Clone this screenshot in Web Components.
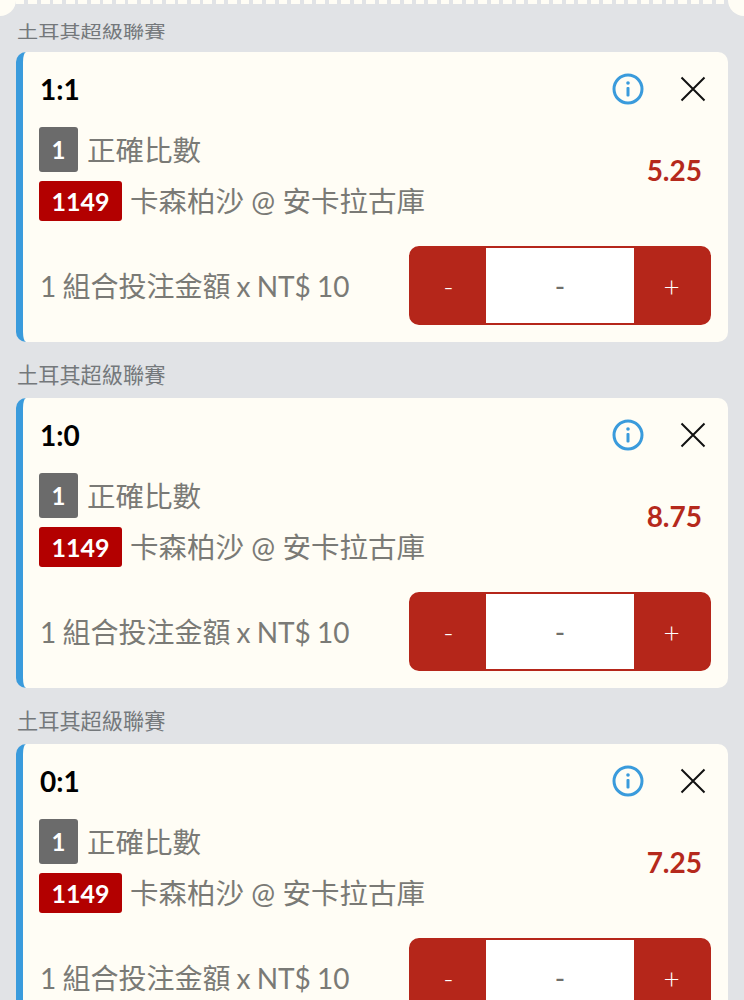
<!DOCTYPE html>
<html lang="zh-Hant"><head><meta charset="utf-8">
<style>
html,body{margin:0;padding:0;height:1000px;overflow:hidden;background:#e1e3e6}
body{font-family:Lato,"Noto Sans CJK TC",sans-serif}
</style></head><body>
<template id="tear-t"><style>
:host{display:flex;height:5px;overflow:visible}
.d{flex:1;height:4px;background:repeating-linear-gradient(90deg,#fffdf5 0 8.5px,#e1e3e6 8.5px 12.5px)}
.c{width:16px;height:16px;background:#fffdf5;flex:none}
.l{border-bottom-right-radius:16px}.r{border-bottom-left-radius:16px}
</style><div class="c l"></div><div class="d"></div><div class="c r"></div></template>
<template id="card-t"><style>
:host{display:block}
.lab{height:var(--lab-h,56px);box-sizing:border-box;padding:var(--lab-pad,21px) 0 0 17px;font:400 21.2px/24px Lato,"Noto Sans CJK TC",sans-serif;color:#74787b}
.lab span{display:block;transform-origin:0 100%;transform:var(--lab-tf,none)}
.card{margin:0 16px;height:290px;box-sizing:border-box;background:#fffdf5;border-left:7px solid #3a9bdc;border-radius:10px;padding:20px 17px 17px 16px;color:#7a7a76}
.top{display:flex;align-items:center;height:34px;padding-bottom:2px;margin-bottom:19px}
.t{font:700 28px/34px Lato,sans-serif;color:#000;flex:1;padding-left:1px}
.ic{display:block}
.i{margin-right:35px}.x{margin-right:4px}
.mid{display:flex;align-items:center}
.info{flex:1;display:flex;flex-direction:column;gap:9px}
.r{display:flex;align-items:center;gap:9px;font:400 28.5px/40px Lato,"Noto Sans CJK TC",sans-serif}
.r.n{gap:8px}
.b{box-sizing:border-box;display:flex;align-items:center;justify-content:center;border-radius:3px;color:#fff;font:700 24px/1 Lato,sans-serif}
.b1{width:39px;height:45px;background:#6b6b6b}
.b2{width:83px;height:40px;background:#b30000;font-size:25px}
.odds{font:700 28px/1 Lato,sans-serif;color:#b5291c;margin:0 9px 0 0;position:relative;top:-4px}
.foot{display:flex;align-items:center;justify-content:space-between;margin-top:25px}
.amt{font:400 28px/40px Lato,"Noto Sans CJK TC",sans-serif;padding-left:1px;word-spacing:-1px}
c-stepper{flex:none}
</style><div class="lab"><span><slot name="league"></slot></span></div>
<div class="card"><div class="top"><div class="t"><slot name="score"></slot></div>
<svg class="ic i" width="32" height="32" viewBox="0 0 32 32"><circle cx="16" cy="16" r="14" fill="none" stroke="#3a9bdc" stroke-width="3"/><circle cx="16" cy="10" r="1.8" fill="#3a9bdc"/><rect x="14.5" y="14" width="3" height="9.5" rx="1" fill="#3a9bdc"/></svg>
<svg class="ic x" width="28" height="28" viewBox="0 0 28 28"><path d="M2.5 2.5 25.5 25.5M25.5 2.5 2.5 25.5" stroke="#111" stroke-width="2" fill="none"/></svg></div>
<div class="mid"><div class="info"><div class="r"><span class="b b1">1</span><span>正確比數</span></div><div class="r n"><span class="b b2">1149</span><span>卡森柏沙 @ 安卡拉古庫</span></div></div><div class="odds"><slot name="odds"></slot></div></div>
<div class="foot"><div class="amt">1 組合投注金額 x NT$ 10</div><c-stepper></c-stepper></div></div></template>
<template id="step-t"><style>
:host{display:flex;width:302px;height:79px;box-sizing:border-box;border:2px solid #b5261a;border-radius:10px;background:#b5261a;font:300 28px/1 Lato,sans-serif;color:#fff;overflow:hidden}
.s{flex:none;width:75px;display:flex;align-items:center;justify-content:center}
.m{flex:1;background:#fff;color:#6f6f6b;font-weight:400;display:flex;align-items:center;justify-content:center}
</style><div class="s">-</div><div class="m">-</div><div class="s">+</div></template>

<c-tear></c-tear>
<c-bet style="--lab-h:47px;--lab-pad:12px;--lab-tf:scaleY(.8)"><span slot="league">土耳其超級聯賽</span><span slot="score">1:1</span><span slot="odds">5.25</span></c-bet>
<c-bet><span slot="league">土耳其超級聯賽</span><span slot="score">1:0</span><span slot="odds">8.75</span></c-bet>
<c-bet><span slot="league">土耳其超級聯賽</span><span slot="score">0:1</span><span slot="odds">7.25</span></c-bet>
<script>
function reg(n,t){customElements.define(n,class extends HTMLElement{constructor(){super();this.attachShadow({mode:'open'}).appendChild(document.getElementById(t).content.cloneNode(true))}})}
reg('c-tear','tear-t');reg('c-stepper','step-t');reg('c-bet','card-t');
</script></body></html>
